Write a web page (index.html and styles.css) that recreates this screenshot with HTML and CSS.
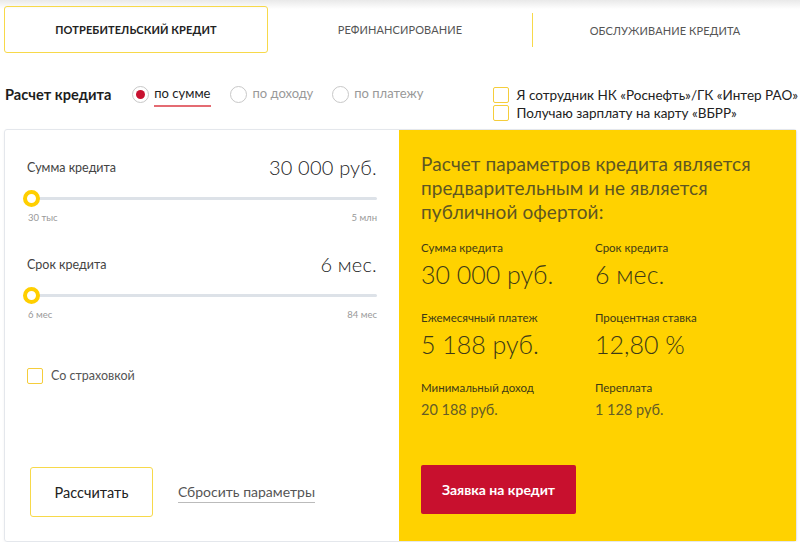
FILE: index.html
```html
<!DOCTYPE html>
<html lang="ru">
<head>
<meta charset="utf-8">
<title>Кредитный калькулятор</title>
<link rel="stylesheet" href="styles.css">
</head>
<body>
<div class="page">
  <nav class="tabs">
    <div class="tab active">ПОТРЕБИТЕЛЬСКИЙ КРЕДИТ</div>
    <div class="tab">РЕФИНАНСИРОВАНИЕ</div>
    <div class="tab sep">ОБСЛУЖИВАНИЕ КРЕДИТА</div>
  </nav>

  <div class="mode-row">
    <div class="mode-left">
      <span class="mode-title">Расчет кредита</span>
      <label class="radio checked"><span class="dot"></span><span class="rtext">по сумме</span></label>
      <label class="radio"><span class="dot"></span><span class="rtext">по доходу</span></label>
      <label class="radio"><span class="dot"></span><span class="rtext">по платежу</span></label>
    </div>
    <div class="mode-right">
      <label class="check"><span class="box"></span>Я сотрудник НК «Роснефть»/ГК «Интер РАО»</label>
      <label class="check"><span class="box"></span>Получаю зарплату на карту «ВБРР»</label>
    </div>
  </div>

  <div class="card">
    <div class="calc">
      <div class="field">
        <div class="field-head"><span class="flabel">Сумма кредита</span><span class="fvalue">30 000 руб.</span></div>
        <div class="slider"><span class="thumb"></span></div>
        <div class="limits"><span>30 тыс</span><span>5 млн</span></div>
      </div>
      <div class="field">
        <div class="field-head"><span class="flabel">Срок кредита</span><span class="fvalue">6 мес.</span></div>
        <div class="slider"><span class="thumb"></span></div>
        <div class="limits"><span>6 мес</span><span>84 мес</span></div>
      </div>
      <label class="check ins"><span class="box"></span>Со страховкой</label>
      <div class="actions">
        <button class="btn-calc">Рассчитать</button>
        <a class="reset">Сбросить параметры</a>
      </div>
    </div>
    <div class="result">
      <p class="note">Расчет параметров кредита является предварительным и не является публичной офертой:</p>
      <div class="grid">
        <div class="cell"><div class="rlabel">Сумма кредита</div><div class="rvalue big">30 000 руб.</div></div>
        <div class="cell"><div class="rlabel">Срок кредита</div><div class="rvalue big">6 мес.</div></div>
        <div class="cell"><div class="rlabel">Ежемесячный платеж</div><div class="rvalue big">5 188 руб.</div></div>
        <div class="cell"><div class="rlabel">Процентная ставка</div><div class="rvalue big">12,80 %</div></div>
        <div class="cell"><div class="rlabel">Минимальный доход</div><div class="rvalue small">20 188 руб.</div></div>
        <div class="cell"><div class="rlabel">Переплата</div><div class="rvalue small">1 128 руб.</div></div>
      </div>
      <button class="btn-apply">Заявка на кредит</button>
    </div>
  </div>
</div>
</body>
</html>
```

FILE: styles.css
```css
* { box-sizing: border-box; }
html, body { margin: 0; padding: 0; }
body {
  font-family: Lato, "Open Sans", sans-serif;
  color: #222;
  background: linear-gradient(#e9e9e9 0, #ffffff 9px) no-repeat;
  background-color: #fff;
}
.page { padding: 6px 3px 0 4px; }

.tabs { display: flex; height: 47px; }
.tab {
  flex: 1;
  display: flex;
  align-items: center;
  justify-content: center;
  font-size: 11px;
  color: #555;
  letter-spacing: 0.1px;
}
.tab.active {
  border: 1px solid #f7d94a;
  border-radius: 3px;
  font-weight: 700;
  color: #222;
  flex: 0 0 264px;
}
.tab.sep { border-left: 1px solid #f7d94a; margin: 7px 0 6px; }

.mode-row {
  display: flex;
  justify-content: space-between;
  margin-top: 34px;
  height: 42px;
}
.mode-left { display: flex; align-items: flex-start; padding-left: 1px; }
.mode-title { font-size: 14.6px; font-weight: 700; margin-top: -1px; margin-right: 21px; color: #1d1d1d; }
.radio { display: flex; align-items: flex-start; margin-right: 19px; font-size: 13px; color: #999; }
.radio .dot {
  width: 17px; height: 17px; border-radius: 50%;
  border: 1px solid #c8c8c8; margin-right: 5px; margin-top: -1px;
  display: flex; align-items: center; justify-content: center;
}
.radio .rtext { margin-top: -2px; padding-bottom: 4px; }
.radio.checked .dot::after {
  content: ""; width: 9px; height: 9px; border-radius: 50%; background: #c81230;
}
.radio.checked .rtext { color: #222; border-bottom: 2px solid #e46b72; padding: 0 1px 4px 0; }

.mode-right { display: flex; flex-direction: column; gap: 2px; margin-top: 0; margin-right: -1px; }
.check { display: flex; align-items: center; font-size: 13.5px; color: #222; line-height: 16px; }
.check .box {
  width: 16px; height: 16px; border: 1px solid #f5cd3b; border-radius: 2px;
  margin-right: 8px; flex: none;
}

.card {
  display: flex;
  border: 1px solid #e4e7ec;
  border-radius: 3px;
  height: 413px;
  box-shadow: 0 1px 3px rgba(0,0,0,0.05);
}
.calc {
  width: 394px;
  padding: 25px 22px 0 22px;
  display: flex;
  flex-direction: column;
}
.field { margin-bottom: 29px; }
.field-head { display: flex; justify-content: space-between; align-items: center; height: 24px; }
.flabel { font-size: 12.5px; color: #444; font-weight: 400; }
.fvalue { font-size: 20px; font-weight: 300; color: #222; letter-spacing: 0.2px; }
.slider {
  position: relative;
  height: 3px;
  background: #dde2e8;
  margin: 18px 0 0 1px;
  border-radius: 2px;
}
.thumb {
  position: absolute;
  left: -5px; top: -7px;
  width: 17px; height: 17px;
  border-radius: 50%;
  border: 4px solid #ffcf00;
  background: #fff;
}
.limits { display: flex; justify-content: space-between; font-size: 9.5px; color: #999; margin-top: 12px; padding-left: 1px; }
.ins { font-size: 12.5px; color: #555; margin-top: 19px; }
.ins .box { margin-right: 8px; }
.actions { display: flex; align-items: center; margin-top: auto; margin-bottom: 24px; padding-left: 3px; }
.btn-calc {
  width: 123px; height: 50px;
  background: #fff;
  border: 1px solid #f7d94a;
  border-radius: 3px;
  font-family: inherit;
  font-size: 14.5px;
  color: #222;
  margin-right: 25px;
}
.reset {
  font-size: 14px; color: #555;
  border-bottom: 1px solid #bbb;
  padding-bottom: 2px;
  margin-top: 2px;
}

.result {
  flex: 1;
  background: #ffd200;
  padding: 22px 20px 0 22px;
  display: flex;
  flex-direction: column;
}
.note {
  margin: 0;
  font-size: 19px;
  line-height: 24px;
  font-weight: 400;
  color: #5e5622;
  letter-spacing: 0.1px;
}
.grid {
  display: grid;
  grid-template-columns: 174px 1fr;
  margin-top: 17px;
}
.cell { height: 70px; }
.cell:nth-child(n+5) { height: 50px; }
.rlabel { font-size: 11.5px; color: #3e3a17; line-height: 14px; }
.rvalue { color: #3e3a17; font-weight: 300; }
.rvalue.big { font-size: 25px; line-height: 30px; margin-top: 4px; }
.rvalue.small { font-size: 14.5px; line-height: 18px; margin-top: 6px; color: #655d26; font-weight: 400; }
.btn-apply {
  width: 155px; height: 49px;
  background: #c8102e;
  color: #fff;
  border: none;
  border-radius: 2px;
  font-family: inherit;
  font-size: 14px;
  font-weight: 700;
  margin-top: 34px;
}
```
